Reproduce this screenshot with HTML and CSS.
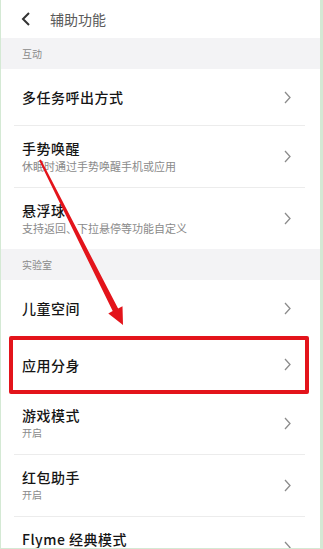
FILE: index.html
```html
<!DOCTYPE html>
<html lang="zh-CN">
<head>
	<meta charset="UTF-8">
	<title>辅助功能</title>
	<link rel="stylesheet" href="styles.css">
</head>
<body>
	<div class="screen">
		<div class="topbar">
			<svg class="back" width="10" height="14" viewBox="0 0 10 14"><path d="M8 1 L2 7 L8 13" fill="none" stroke="#333" stroke-width="2"/></svg>
			<span class="title">辅助功能</span>
		</div>

		<div class="group">互动</div>
		<ul class="list">
			<li class="item">
				<div class="text"><div class="name">多任务呼出方式</div></div>
				<svg class="chev" width="7" height="13" viewBox="0 0 7 13"><path d="M1 1 L6 6.5 L1 12" fill="none" stroke="#8c8c8c" stroke-width="1.3"/></svg>
			</li>
			<li class="item two">
				<div class="text">
					<div class="name">手势唤醒</div>
					<div class="desc">休眠时通过手势唤醒手机或应用</div>
				</div>
				<svg class="chev" width="7" height="13" viewBox="0 0 7 13"><path d="M1 1 L6 6.5 L1 12" fill="none" stroke="#8c8c8c" stroke-width="1.3"/></svg>
			</li>
			<li class="item two">
				<div class="text">
					<div class="name">悬浮球</div>
					<div class="desc">支持返回、下拉悬停等功能自定义</div>
				</div>
				<svg class="chev" width="7" height="13" viewBox="0 0 7 13"><path d="M1 1 L6 6.5 L1 12" fill="none" stroke="#8c8c8c" stroke-width="1.3"/></svg>
			</li>
		</ul>

		<div class="group">实验室</div>
		<ul class="list">
			<li class="item">
				<div class="text"><div class="name">儿童空间</div></div>
				<svg class="chev" width="7" height="13" viewBox="0 0 7 13"><path d="M1 1 L6 6.5 L1 12" fill="none" stroke="#8c8c8c" stroke-width="1.3"/></svg>
			</li>
			<li class="item">
				<div class="text"><div class="name">应用分身</div></div>
				<svg class="chev" width="7" height="13" viewBox="0 0 7 13"><path d="M1 1 L6 6.5 L1 12" fill="none" stroke="#8c8c8c" stroke-width="1.3"/></svg>
			</li>
			<li class="item two">
				<div class="text">
					<div class="name">游戏模式</div>
					<div class="desc small">开启</div>
				</div>
				<svg class="chev" width="7" height="13" viewBox="0 0 7 13"><path d="M1 1 L6 6.5 L1 12" fill="none" stroke="#8c8c8c" stroke-width="1.3"/></svg>
			</li>
			<li class="item two">
				<div class="text">
					<div class="name">红包助手</div>
					<div class="desc small">开启</div>
				</div>
				<svg class="chev" width="7" height="13" viewBox="0 0 7 13"><path d="M1 1 L6 6.5 L1 12" fill="none" stroke="#8c8c8c" stroke-width="1.3"/></svg>
			</li>
			<li class="item two">
				<div class="text cut"><div class="name">Flyme 经典模式</div></div>
				<svg class="chev" width="7" height="13" viewBox="0 0 7 13"><path d="M1 1 L6 6.5 L1 12" fill="none" stroke="#8c8c8c" stroke-width="1.3"/></svg>
			</li>
		</ul>

		<!-- 标注：红框和箭头 -->
		<div class="mark-box"></div>
		<svg class="mark-arrow" width="323" height="549" viewBox="0 0 323 549">
			<polygon fill="#e3141b" points="40.9,159.6 118.1,308.5 122.5,306.2 123,325 108.3,313.4 112.7,311.1 39.1,160.4"/>
		</svg>
	</div>
</body>
</html>
```

FILE: styles.css
```css
*{
	margin: 0;
	padding: 0;
	box-sizing: border-box;
}
ul,li{
	list-style: none;
}
body{
	width: 323px;
	height: 549px;
	overflow: hidden;
	background: #fff;
	font-family: "Noto Sans CJK SC", "Noto Sans", sans-serif;
}
.screen{
	position: relative;
	height: 549px;
	overflow: hidden;
	border-left: 1px solid #d4e9d4;
	border-right: 3px solid #d4e9d4;
	border-bottom: 1px solid #d4e9d4;
}
.topbar{
	display: flex;
	align-items: center;
	height: 38px;
	padding-left: 20px;
}
.topbar .back{
	display: block;
	flex-shrink: 0;
}
.topbar .title{
	margin-left: 19px;
	font-size: 14px;
	color: #5a5a5a;
}
.group{
	display: flex;
	align-items: center;
	height: 31px;
	padding-left: 21px;
	background: #f3f3f5;
	font-size: 10px;
	color: #8a8a8a;
}
.list{
	padding: 0 15px 0 13px;
}
.item{
	display: flex;
	align-items: center;
	justify-content: space-between;
	height: 56px;
	padding: 0 14px 0 8px;
}
.item.two{
	height: 62px;
}
.item + .item{
	border-top: 1px solid #ececec;
}
.item .name{
	font-size: 14px;
	line-height: 18px;
	font-weight: 500;
	color: #151515;
	letter-spacing: 0.5px;
}
.item .desc{
	margin-top: 1px;
	font-size: 11px;
	line-height: 16px;
	color: #8a8a8a;
}
.item .desc.small{
	font-size: 10px;
}
/* 最后一行只露出标题，下面的说明被屏幕截断 */
.item .text.cut{
	padding-bottom: 17px;
}
.item .chev{
	display: block;
	flex-shrink: 0;
}
.mark-box{
	position: absolute;
	left: 8px;
	top: 336px;
	width: 300px;
	height: 58px;
	border: 4px solid #e3141b;
	border-radius: 2px;
}
.mark-arrow{
	position: absolute;
	left: -1px;
	top: 0;
}
```
